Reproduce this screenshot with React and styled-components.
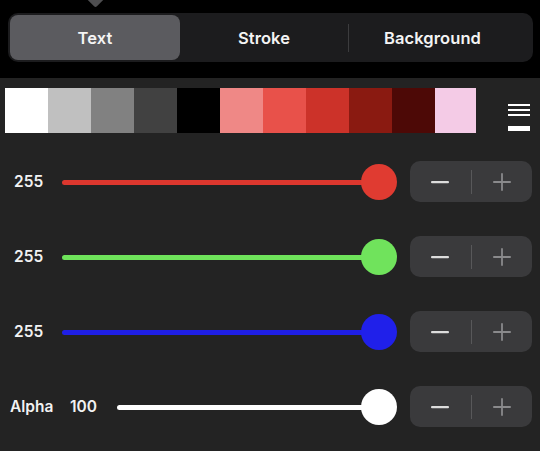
import React, { useState } from "react";
import styled, { createGlobalStyle } from "styled-components";

const Global = createGlobalStyle`
  html, body { margin: 0; padding: 0; background: #000; }
  body { font-family: Inter, "Noto Sans", "Liberation Sans", sans-serif; -webkit-font-smoothing: antialiased; }
  * { box-sizing: border-box; }
`;

const Page = styled.div`
  width: 540px;
  height: 451px;
  overflow: hidden;
  display: flex;
  flex-direction: column;
  background: #232323;
`;

const TopBar = styled.div`
  position: relative;
  height: 78px;
  flex: none;
  background: #000;
  padding: 13px 7px 0 8px;
`;

const Arrow = styled.div`
  position: absolute;
  left: 89px;
  top: -8px;
  width: 13px;
  height: 13px;
  background: #4e4e50;
  transform: rotate(45deg);
  border-radius: 2px;
`;

const Segmented = styled.div`
  height: 49px;
  background: #1c1c1e;
  border-radius: 10px;
  padding: 2px;
  display: grid;
  grid-template-columns: 170px 168px 1fr;
`;

const Segment = styled.div`
  position: relative;
  display: flex;
  align-items: center;
  justify-content: center;
  padding-right: ${(p) => p.$pr || 0}px;
  border-radius: 8px;
  background: ${(p) => (p.$active ? "#5b5b5f" : "transparent")};
  color: #f4f4f4;
  font-size: 16.5px;
  font-weight: 600;
  letter-spacing: 0.1px;
  &::before {
    content: "";
    display: ${(p) => (p.$divider ? "block" : "none")};
    position: absolute;
    left: 0;
    top: 9px;
    bottom: 8px;
    width: 1px;
    background: #3c3c3e;
  }
`;

const Panel = styled.div`
  flex: 1;
  padding-top: 10px;
`;

const SwatchRow = styled.div`
  display: flex;
  align-items: stretch;
  height: 45px;
  padding-left: 5px;
`;

const Swatches = styled.div`
  display: grid;
  grid-template-columns: repeat(10, 43px) 41px;
`;

const Swatch = styled.div`
  background: ${(p) => p.$c};
`;

const MenuIcon = styled.div`
  margin-left: 32px;
  width: 22px;
  display: flex;
  flex-direction: column;
  padding-top: 16px;
`;

const MenuLine = styled.div`
  height: 2px;
  background: #fff;
  margin-bottom: 3px;
`;

const MenuBar = styled.div`
  height: 5px;
  background: #fff;
  margin-top: 7px;
`;

const Rows = styled.div`
  margin-top: 11px;
  display: flex;
  flex-direction: column;
`;

const Row = styled.div`
  height: 75px;
  display: flex;
  align-items: center;
  padding-left: 10px;
  padding-right: 8px;
`;

const LabelGroup = styled.div`
  width: ${(p) => p.$w}px;
  flex: none;
  display: flex;
  align-items: center;
  color: #f2f2f2;
  font-size: 15.5px;
  font-weight: 600;
`;

const Name = styled.span`
  width: 60px;
`;

const Value = styled.span`
  padding-left: ${(p) => p.$pl || 0}px;
`;

const SliderBox = styled.div`
  position: relative;
  flex: 1;
  height: 36px;
  margin-right: 13px;
`;

const Track = styled.div`
  position: absolute;
  left: 0;
  right: 17px;
  top: 50%;
  height: 5px;
  margin-top: -2px;
  border-radius: 3px;
  background: #5a5a5c;
  overflow: hidden;
`;

const Fill = styled.div`
  height: 100%;
  background: ${(p) => p.$c};
`;

const Thumb = styled.div`
  position: absolute;
  top: 0;
  width: 36px;
  height: 36px;
  border-radius: 50%;
  background: ${(p) => p.$c};
`;

const Stepper = styled.div`
  flex: none;
  width: 122px;
  height: 41px;
  border-radius: 10px;
  background: #3a3a3c;
  display: grid;
  grid-template-columns: 1fr 1px 1fr;
  align-items: center;
`;

const StepBtn = styled.button`
  border: 0;
  background: transparent;
  height: 41px;
  padding: 0;
  display: flex;
  align-items: center;
  justify-content: center;
  cursor: pointer;
`;

const StepDivider = styled.div`
  height: 24px;
  background: #58585a;
`;

const Minus = () => (
  <svg width="18" height="18" viewBox="0 0 18 18">
    <rect x="0" y="8" width="18" height="2.2" rx="1" fill="#dcdcdc" />
  </svg>
);

const Plus = () => (
  <svg width="18" height="18" viewBox="0 0 18 18">
    <rect x="0" y="8.1" width="18" height="1.8" rx="0.9" fill="#8a8a8c" />
    <rect x="8.1" y="0" width="1.8" height="18" rx="0.9" fill="#8a8a8c" />
  </svg>
);

const swatches = [
  "#ffffff", "#c0c0c0", "#818181", "#414141", "#000000",
  "#ef8886", "#e8514a", "#cc3229", "#8a1a11", "#4d0906", "#f4cbe6",
];

const sliders = [
  { key: "r", value: 255, max: 255, color: "#dc372e", thumb: "#e03b31" },
  { key: "g", value: 255, max: 255, color: "#6ee35a", thumb: "#70e35c" },
  { key: "b", value: 255, max: 255, color: "#1f1fe6", thumb: "#2020ea" },
  { key: "a", name: "Alpha", value: 100, max: 100, color: "#ffffff", thumb: "#ffffff" },
];

export default function App() {
  const [tab] = useState(0);
  const tabs = ["Text", "Stroke", "Background"];
  return (
    <>
      <Global />
      <Page>
        <TopBar>
          <Arrow />
          <Segmented>
            {tabs.map((t, i) => (
              <Segment key={t} $active={tab === i} $divider={i === 2} $pr={i === 2 ? 14 : 0}>
                {t}
              </Segment>
            ))}
          </Segmented>
        </TopBar>
        <Panel>
          <SwatchRow>
            <Swatches>
              {swatches.map((c) => (
                <Swatch key={c} $c={c} />
              ))}
            </Swatches>
            <MenuIcon>
              <MenuLine />
              <MenuLine />
              <MenuLine />
              <MenuBar />
            </MenuIcon>
          </SwatchRow>
          <Rows>
            {sliders.map((s) => {
              const pct = s.value / s.max;
              return (
                <Row key={s.key}>
                  <LabelGroup $w={s.name ? 107 : 52}>
                    {s.name && <Name>{s.name}</Name>}
                    <Value $pl={s.name ? 0 : 4}>{s.value}</Value>
                  </LabelGroup>
                  <SliderBox>
                    <Track>
                      <Fill $c={s.color} style={{ width: `${pct * 100}%` }} />
                    </Track>
                    <Thumb $c={s.thumb} style={{ left: `calc(${pct} * (100% - 36px))` }} />
                  </SliderBox>
                  <Stepper>
                    <StepBtn aria-label="decrease"><Minus /></StepBtn>
                    <StepDivider />
                    <StepBtn aria-label="increase"><Plus /></StepBtn>
                  </Stepper>
                </Row>
              );
            })}
          </Rows>
        </Panel>
      </Page>
    </>
  );
}
